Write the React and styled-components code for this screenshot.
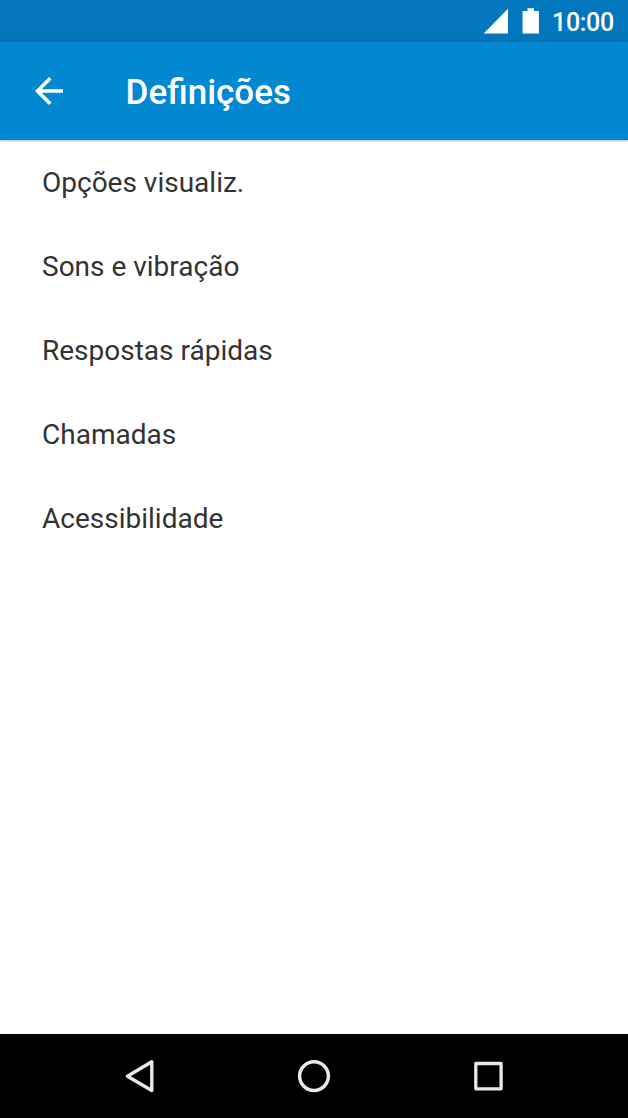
import React from "react";
import styled, { createGlobalStyle } from "styled-components";

const GlobalStyle = createGlobalStyle`
  * { box-sizing: border-box; }
  body { margin: 0; background: #fff; font-family: Roboto, sans-serif; }
`;

const Screen = styled.div`
  width: 628px;
  height: 1118px;
  display: flex;
  flex-direction: column;
  background: #fff;
  overflow: hidden;
`;

const StatusBar = styled.div`
  height: 42px;
  flex: none;
  display: flex;
  align-items: center;
  justify-content: flex-end;
  padding: 0 14px 0 0;
  background: linear-gradient(#0277bd 0 34px, #0273b6 42px);
  color: #fff;
  svg { display: block; }
`;

const Clock = styled.span`
  width: 62px;
  margin-left: 13px;
  padding-top: 4px;
  font-size: 25px;
  font-weight: 500;
  letter-spacing: -0.3px;
  line-height: 40px;
  white-space: nowrap;
`;

const BatteryIcon = styled.svg`
  margin-left: 14px;
`;

const AppBar = styled.header`
  height: 98px;
  flex: none;
  display: flex;
  align-items: center;
  padding: 0 0 0 35px;
  background: #0288d1;
  color: #fff;
  box-shadow: 0 1px 2px rgba(0, 0, 0, 0.3);
`;

const BackButton = styled.div`
  width: 90.6px;
  svg { display: block; }
`;

const Title = styled.h1`
  margin: 0;
  padding-top: 4px;
  font-size: 35px;
  font-weight: 500;
  line-height: 42px;
`;

const SettingsList = styled.main`
  flex: 1;
  padding-top: 1px;
`;

const SettingsRow = styled.div`
  height: 84px;
  padding-left: 42px;
  font-size: 28px;
  line-height: 84px;
  color: #333;
`;

const NavBar = styled.nav`
  height: 84px;
  flex: none;
  display: flex;
  align-items: center;
  justify-content: center;
  gap: 134px;
  background: #000;
  svg { display: block; }
`;

const items = ["Opções visualiz.", "Sons e vibração", "Respostas rápidas", "Chamadas", "Acessibilidade"];

export default function App() {
  return (
    <Screen>
      <GlobalStyle />
      <StatusBar>
        <svg width="25" height="26" viewBox="0 0 25 26"><path d="M25 .8V25.5H.7Z" fill="#fff" /></svg>
        <BatteryIcon width="17" height="26" viewBox="0 0 17 26">
          <path d="M5.5 .3h6.4v2.6h5V25.6H.6V2.9h4.9z" fill="#fff" />
        </BatteryIcon>
        <Clock>10:00</Clock>
      </StatusBar>
      <AppBar>
        <BackButton>
          <svg width="28" height="28" viewBox="4 4 16 16" fill="#fff">
            <path d="M20 11H7.83l5.59-5.59L12 4l-8 8 8 8 1.41-1.41L7.83 13H20z" />
          </svg>
        </BackButton>
        <Title>Definições</Title>
      </AppBar>
      <SettingsList>
        {items.map((item) => <SettingsRow key={item}>{item}</SettingsRow>)}
      </SettingsList>
      <NavBar>
        <svg width="40" height="40" viewBox="0 0 40 40" fill="none" stroke="#e8e8e8" strokeWidth="3.4" strokeLinejoin="round"><path d="M31.8 5.8V34.5L7.4 20.2Z" /></svg>
        <svg width="40" height="40" viewBox="0 0 40 40" fill="none" stroke="#e8e8e8" strokeWidth="3.5"><circle cx="20" cy="20.1" r="14.4" /></svg>
        <svg width="40" height="40" viewBox="0 0 40 40" fill="none" stroke="#e8e8e8" strokeWidth="3.3" strokeLinejoin="round"><rect x="7.8" y="7.5" width="25.3" height="25.3" /></svg>
      </NavBar>
    </Screen>
  );
}
